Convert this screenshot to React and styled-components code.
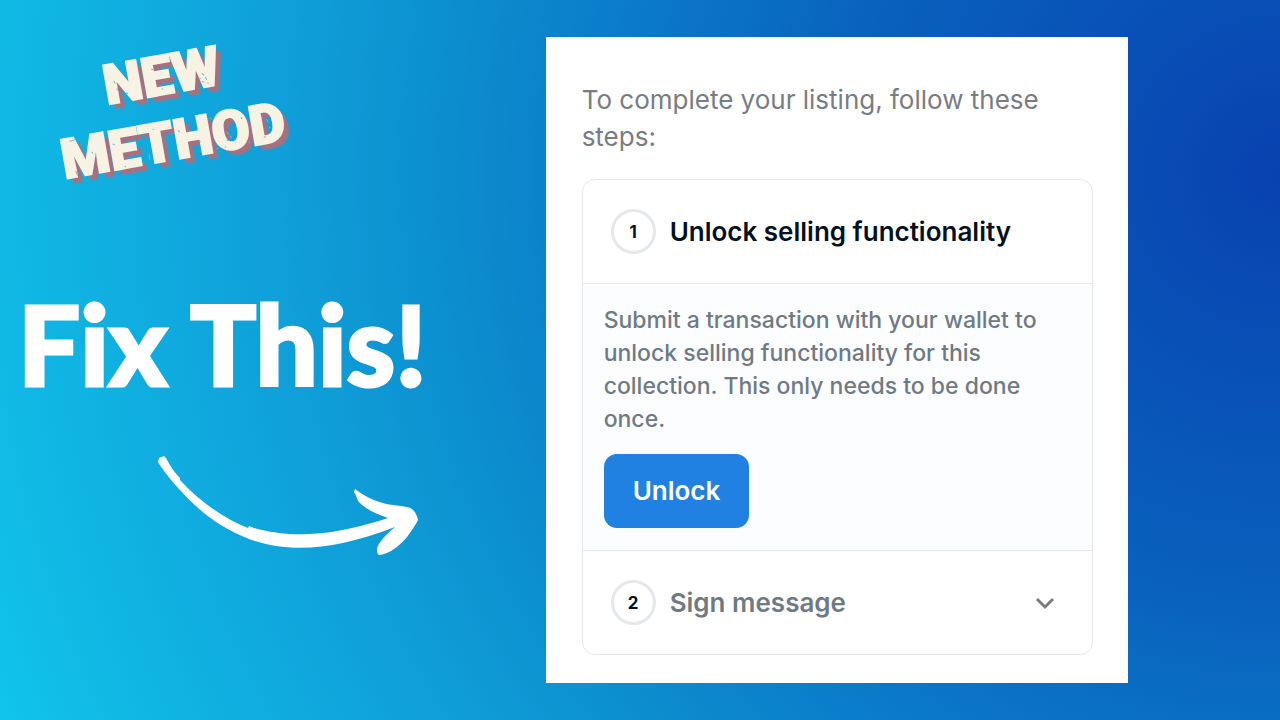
import React from "react";
import styled, { createGlobalStyle } from "styled-components";

const GlobalStyle = createGlobalStyle`
  * { box-sizing: border-box; }
  body { margin: 0; font-family: Inter, "Open Sans", sans-serif; }
  h1, h2, p, ol { margin: 0; padding: 0; }
`;

const Page = styled.main`
  min-height: 100vh;
  display: grid;
  grid-template-columns: 15fr 16fr;
  align-items: start;
  padding: 37px 11.9% 37px 0;
  background: radial-gradient(
    circle at 100% 24%,
    #0842b0 0%,
    #0960bd 30%,
    #0a76c8 45%,
    #0c8ece 60%,
    #0f9fd9 72%,
    #10bae5 93%,
    #10c5ec 100%
  );
`;

const Promo = styled.section`
  display: flex;
  flex-direction: column;
  align-items: flex-start;
  padding-left: 18px;
`;

const Badge = styled.p`
  position: relative;
  margin: 5px 0 0 36px;
  transform: rotate(-10deg);
  font-family: Roboto, sans-serif;
  font-size: 55px;
  font-weight: 900;
  line-height: 66px;
  text-align: center;
  color: #f6f2e4;
  -webkit-text-stroke: 2px #f6f2e4;
  text-shadow: 5px 6px 2px #a8707e;
`;

const BadgeLine = styled.span`
  display: block;
`;

const Grain = styled.svg`
  position: absolute;
  inset: 0;
  width: 100%;
  height: 100%;
`;

const Headline = styled.h1`
  margin-top: 109px;
  font-family: Lato, sans-serif;
  font-size: 110px;
  font-weight: 900;
  line-height: 120px;
  white-space: nowrap;
  color: #fff;
  -webkit-text-stroke: 3px #fff;
`;

const Arrow = styled.svg`
  width: 264px;
  height: 104px;
  margin: 53px 0 0 140px;
`;

const Card = styled.section`
  padding: 44px 35px 28px 36px;
  background: #fff;
`;

const Intro = styled.p`
  margin-bottom: 24px;
  font-size: 26px;
  line-height: 37px;
  color: #787d83;
`;

const Steps = styled.ol`
  list-style: none;
  border: 1px solid #e5e8eb;
  border-radius: 13px;
  overflow: hidden;
`;

const Step = styled.li`
  & + & { border-top: 1px solid #e5e8eb; }
`;

const StepHeader = styled.div`
  display: flex;
  align-items: center;
  gap: 14px;
  padding: 29px 37px 29px 28px;
`;

const StepNumber = styled.span`
  display: grid;
  place-items: center;
  width: 45px;
  height: 45px;
  border: 3px solid #e5e8eb;
  border-radius: 50%;
  font-size: 17px;
  font-weight: 700;
  color: #04111d;
`;

const StepTitle = styled.h2`
  font-size: 26px;
  font-weight: 600;
  line-height: 36px;
  color: ${(p) => (p.$muted ? "#707a83" : "#04111d")};
`;

const Chevron = styled.svg`
  width: 20px;
  height: 14px;
  margin-left: auto;
`;

const StepBody = styled.div`
  padding: 20px 21px 22px;
  border-top: 1px solid #e5e8eb;
  background: #fbfdff;
`;

const StepText = styled.p`
  margin-bottom: 18px;
  font-size: 23px;
  font-weight: 500;
  line-height: 33px;
  color: #707a83;
`;

const UnlockButton = styled.button`
  padding: 19px 29px;
  border: 0;
  border-radius: 13px;
  background: #2081e2;
  color: #fff;
  font-family: inherit;
  font-size: 26px;
  font-weight: 600;
  line-height: 36px;
  cursor: pointer;
`;

export default function App() {
  return (
    <>
      <GlobalStyle />
      <Page>
        <Promo>
          <Badge>
            <BadgeLine>NEW</BadgeLine>
            <BadgeLine>METHOD</BadgeLine>
            <Grain viewBox="0 0 220 132" fill="none" stroke="#7fb3c4" strokeWidth="1" aria-hidden="true">
              <path d="M62 30l1 3M64 38l0 2M72 44l2 1M101 25l2 1M108 46l1 1M150 38l2 2M153 42l1 3M149 46l2 1M154 48l1 1M147 42l1 1" />
              <path d="M8 82l6 -1M9 112l1 5M28 96l1 2M31 104l1 1M50 92l2 1M58 116l1 1M84 108l0 6M92 84l1 1M117 90l1 2M136 104l1 1M150 84l2 0M164 100l2 2M167 104l1 3M163 108l2 1M160 114l1 1M152 114l1 1M181 88l1 2M206 94l1 4M207 102l1 2M200 112l2 -1M184 114l1 1" />
            </Grain>
          </Badge>
          <Headline>Fix This!</Headline>
          <Arrow viewBox="0 0 264 104" fill="#fff" aria-hidden="true">
            <path d="M0 6 L1 2 L6 0 L8 2 C12 10 17 17 22 22 L22 24 C41 45 65 62 90 72 L91 70 L96 72 C122 79 160 85 230 62 C219 58 209 54 202 47 C199 45 199 40 196 36 L197 33 C209 42 222 48 236 49 L249 51 C256 52 259 59 260 64 C258 68 253 76 249 81 C244 87 237 93 233 95 C229 97 224 99 221 99 C219 98 219 95 219 92 C222 84 230 77 237 71 C175 95 130 97 91 83 C60 71 38 52 22 34 C12 23 4 13 0 6 Z" />
          </Arrow>
        </Promo>
        <Card>
          <Intro>To complete your listing, follow these steps:</Intro>
          <Steps>
            <Step>
              <StepHeader>
                <StepNumber>1</StepNumber>
                <StepTitle>Unlock selling functionality</StepTitle>
              </StepHeader>
              <StepBody>
                <StepText>
                  Submit a transaction with your wallet to unlock selling
                  functionality for this collection. This only needs to be done
                  once.
                </StepText>
                <UnlockButton type="button">Unlock</UnlockButton>
              </StepBody>
            </Step>
            <Step>
              <StepHeader>
                <StepNumber>2</StepNumber>
                <StepTitle $muted>Sign message</StepTitle>
                <Chevron viewBox="0 0 20 14" fill="none" stroke="#7a7d80" strokeWidth="3" aria-hidden="true">
                  <path d="M2 3 L10 11 L18 3" />
                </Chevron>
              </StepHeader>
            </Step>
          </Steps>
        </Card>
      </Page>
    </>
  );
}
